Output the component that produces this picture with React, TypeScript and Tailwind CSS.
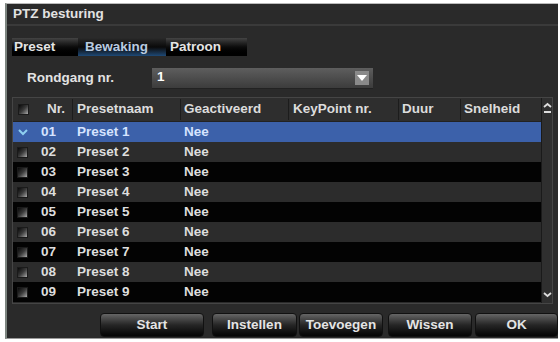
import React from "react";

const rows = [1, 2, 3, 4, 5, 6, 7, 8, 9].map((n) => ({
  nr: String(n).padStart(2, "0"),
  name: `Preset ${n}`,
  active: "Nee",
}));

const rowBg = (i: number) =>
  i === 0 ? "bg-[#3c61aa]" : i % 2 === 1 ? "bg-[#2c2c2c]" : "bg-[#030303]";

function Check({ checked }: { checked?: boolean }) {
  if (checked) {
    return (
      <div className="w-[11px] h-[11px] flex items-center justify-center">
        <svg width="10" height="8" viewBox="0 0 10 8">
          <path d="M1 2 L5 6 L9 2" stroke="#8fd0f0" strokeWidth="2" fill="none" />
        </svg>
      </div>
    );
  }
  return (
    <div className="w-[11px] h-[11px] bg-gradient-to-br from-[#0a0a0a] via-[#3a3a3a] to-[#aaa] border border-[#1a1a1a]" />
  );
}

function Button({ label, w }: { label: string; w: string }) {
  return (
    <div
      className={`${w} h-[24px] rounded-[4px] bg-gradient-to-b from-[#666] via-[#262626] to-[#050505] border border-[#111] flex items-center justify-center text-[13.5px] font-bold text-[#e4e4e4]`}
    >
      {label}
    </div>
  );
}

export default function App() {
  return (
    <div className="w-[560px] h-[342px] bg-white pt-[3px] pl-[5px] font-['Liberation_Sans',Arial,sans-serif]">
      <div className="w-[553px] h-[336px] bg-[#2a2a2a] border-l-2 border-l-[#7d8580] border-t border-t-[#bbb] border-b border-b-[#999] flex flex-col">
        {/* Title */}
        <div className="h-[22px] flex items-center pl-[6px] text-[13.5px] font-bold text-[#e2e2e2] border-b-2 border-b-[#3a3a3a]">
          PTZ besturing
        </div>

        {/* Tabs */}
        <div className="mt-[12px] ml-[5px] w-[235px] h-[18px] flex items-center bg-gradient-to-b from-[#444] via-[#0c0c0c] to-[#000] text-[13.5px] font-bold">
          <div className="w-[66px] pl-[2px] text-[#e4e4e4]">Preset</div>
          <div className="w-[88px] h-full flex items-center pl-[7px] text-[#b9cbe0] bg-gradient-to-b from-[#2a2a2a] via-[#0a0a0a] to-[#1d4a78]">
            Bewaking
          </div>
          <div className="pl-[4px] text-[#e4e4e4]">Patroon</div>
        </div>

        {/* Rondgang */}
        <div className="mt-[11px] flex items-center h-[22px]">
          <div className="w-[145px] pl-[20px] text-[13.5px] font-bold text-[#e2e2e2]">Rondgang nr.</div>
          <div className="w-[221px] h-[21px] bg-gradient-to-b from-[#5e5e5e] to-[#3c3c3c] border-b border-b-[#222] flex items-center justify-between pl-[5px] pr-[4px]">
            <span className="text-[13.5px] font-bold text-white">1</span>
            <div className="w-[14px] h-[14px] bg-[#8a8a8a] flex flex-col items-center justify-center gap-[1px]">
              <svg width="10" height="6" viewBox="0 0 10 6">
                <path d="M0 0 L10 0 L5 6 Z" fill="#fff" />
              </svg>
            </div>
          </div>
        </div>

        {/* Table */}
        <div className="mt-[8px] ml-[5px] w-[541px] h-[207px] border border-[#454545] flex">
          <div className="w-[528px] flex flex-col">
            <div className="h-[24px] flex items-center bg-[#2e2e2e] text-[13.5px] font-bold text-[#dcdcdc] border-b border-b-[#222]">
              <div className="w-[22px] pl-[5px]"><Check /></div>
              <div className="w-[38px] pl-[12px] border-r border-r-[#1c1c1c]">Nr.</div>
              <div className="w-[108px] pl-[4px] border-r border-r-[#1c1c1c]">Presetnaam</div>
              <div className="w-[108px] pl-[3px] border-r border-r-[#1c1c1c]">Geactiveerd</div>
              <div className="w-[110px] pl-[4px] border-r border-r-[#1c1c1c]">KeyPoint nr.</div>
              <div className="w-[62px] pl-[3px] border-r border-r-[#1c1c1c]">Duur</div>
              <div className="w-[80px] pl-[3px]">Snelheid</div>
            </div>
            {rows.map((r, i) => (
              <div
                key={r.nr}
                className={`h-[20px] flex items-center text-[13.5px] font-bold ${rowBg(i)} ${i === 0 ? "text-[#d6e4ff]" : "text-[#dedede]"}`}
              >
                <div className="w-[22px] pl-[4px]"><Check checked={i === 0} /></div>
                <div className="w-[38px] pl-[6px]">{r.nr}</div>
                <div className="w-[108px] pl-[4px]">{r.name}</div>
                <div className="w-[108px] pl-[3px]">{r.active}</div>
              </div>
            ))}
          </div>
          <div className="flex-1 bg-[#2f2f2f] border-l border-l-[#1a1a1a] flex flex-col items-center justify-between py-[4px]">
            <svg width="9" height="14" viewBox="0 0 9 14">
              <path d="M1 5 L4.5 2 L8 5" stroke="#ddd" strokeWidth="1.8" fill="none" />
              <rect x="1" y="9" width="7" height="2" fill="#ddd" />
            </svg>
            <svg width="9" height="8" viewBox="0 0 9 8">
              <path d="M1 2 L4.5 5 L8 2" stroke="#ddd" strokeWidth="1.8" fill="none" />
            </svg>
          </div>
        </div>

        {/* Buttons */}
        <div className="mt-[9px] flex items-center pl-[93px] gap-[2px]">
          <Button label="Start" w="w-[104px] mr-[6px]" />
          <Button label="Instellen" w="w-[85px]" />
          <Button label="Toevoegen" w="w-[84px] mr-[3px]" />
          <Button label="Wissen" w="w-[84px] mr-[1px]" />
          <Button label="OK" w="w-[83px]" />
        </div>
      </div>
    </div>
  );
}
